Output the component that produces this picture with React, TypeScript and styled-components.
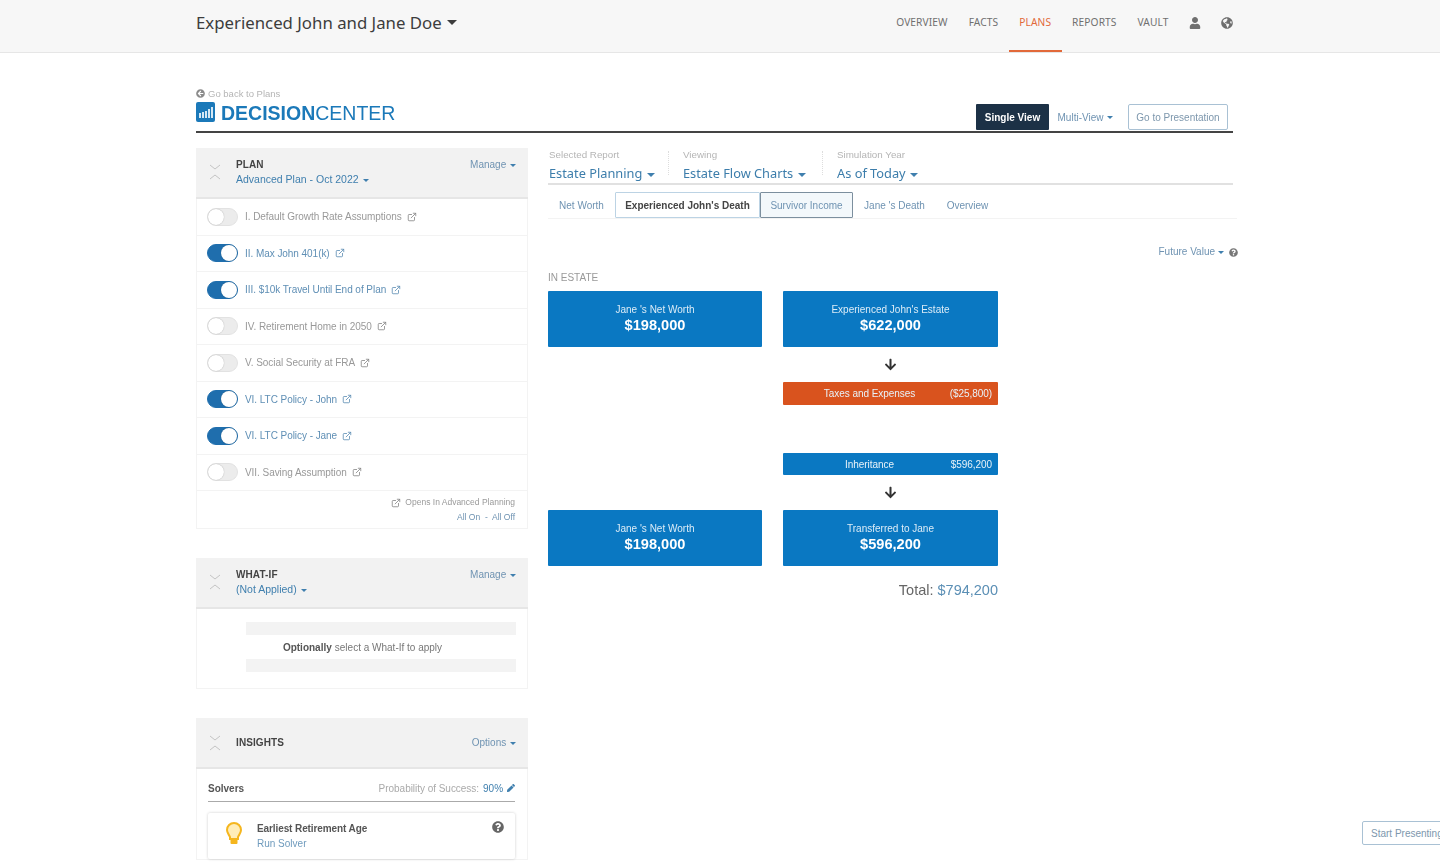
import React from 'react';
import styled, { createGlobalStyle } from 'styled-components';
import { ExternalLink } from 'lucide-react';
import {
  FaArrowCircleLeft,
  FaArrowDown,
  FaGlobeAmericas,
  FaPen,
  FaQuestionCircle,
  FaUser,
} from 'react-icons/fa';

const BLUE = '#0a78c2';
const LINK = '#3f7fae';
const TITLE_FONT = '"Noto Sans", "Open Sans", sans-serif';

const GlobalStyle = createGlobalStyle`
  html, body {
    margin: 0;
    padding: 0;
    background: #fff;
    overflow: hidden;
    font-family: "Liberation Sans", Arial, sans-serif;
  }
  * { box-sizing: border-box; }
`;

const Page = styled.div`
  width: 1440px;
  height: 864px;
  overflow: hidden;
  filter: blur(0.35px);
`;

const TopBar = styled.header`
  height: 53px;
  background: #f7f7f7;
  border-bottom: 1px solid #e6e6e6;
  padding: 0 207px 0 196px;
  display: flex;
  align-items: stretch;
  justify-content: space-between;
`;

const ClientName = styled.div`
  display: flex;
  align-items: center;
  gap: 4px;
  padding-bottom: 7px;
  font-family: ${TITLE_FONT};
  font-size: 16.8px;
  color: #3d3d3d;
`;

const Caret = styled.span<{ $size?: number; $color?: string }>`
  display: inline-block;
  width: 0;
  height: 0;
  margin-left: 1px;
  vertical-align: 1px;
  border-left: ${(p) => p.$size || 3}px solid transparent;
  border-right: ${(p) => p.$size || 3}px solid transparent;
  border-top: ${(p) => p.$size || 3}px solid ${(p) => p.$color || LINK};
`;

const Nav = styled.nav`
  display: flex;
  align-items: stretch;
`;

const NavLink = styled.a<{ $active?: boolean }>`
  display: flex;
  align-items: center;
  padding: 0 10.5px 6px;
  font-family: ${TITLE_FONT};
  font-size: 10.2px;
  letter-spacing: 0.1px;
  color: ${(p) => (p.$active ? '#e2693a' : '#707070')};
  border-bottom: 2px solid ${(p) => (p.$active ? '#e2693a' : 'transparent')};
`;

const NavIcon = styled.span`
  display: flex;
  align-items: center;
  padding: 0 0 7px 0;
  margin-left: 10px;
  font-size: 12px;
  color: #6f6f6f;
  & + & { margin-left: 20px; }
`;

const Content = styled.main`
  width: 1037px;
  margin-left: 196px;
`;

const TitleRow = styled.div`
  height: 80px;
  padding-top: 35px;
  display: flex;
  justify-content: space-between;
  align-items: flex-end;
  border-bottom: 2px solid #444;
`;

const BackLink = styled.div`
  display: flex;
  align-items: center;
  gap: 3px;
  margin-bottom: 3px;
  font-size: 9.5px;
  color: #b5b5b5;
  svg { color: #8b8b8b; font-size: 9px; }
`;

const Logo = styled.div`
  height: 20px;
  display: flex;
  align-items: flex-start;
  gap: 6px;
  margin: 1px 0 9px;
  font-size: 19.5px;
  color: #1b79b9;
  font-weight: 400;
  line-height: 20px;
  b { font-weight: 700; }
  span { padding-top: 1px; }
`;

const ViewSwitch = styled.div`
  display: flex;
  align-items: center;
  padding: 0 5px 1px 0;
`;

const SingleView = styled.div`
  width: 73px;
  height: 26px;
  display: flex;
  align-items: center;
  justify-content: center;
  background: #1c3146;
  color: #fff;
  font-size: 10px;
  font-weight: 700;
  border-radius: 1px;
`;

const MultiView = styled.div`
  width: 73px;
  height: 26px;
  display: flex;
  align-items: center;
  justify-content: center;
  gap: 3px;
  color: #6f93b2;
  font-size: 10px;
`;

const Outlined = styled.div`
  width: 100px;
  height: 26px;
  margin-left: 6px;
  display: flex;
  align-items: center;
  justify-content: center;
  color: #7d97ad;
  font-size: 10px;
  border: 1px solid #a9c1d4;
  border-radius: 2px;
`;

const Columns = styled.div`
  display: grid;
  grid-template-columns: 332px 685px;
  column-gap: 20px;
  padding-top: 15px;
`;

const Sidebar = styled.aside`
  display: flex;
  flex-direction: column;
  gap: 29px;
`;

const Panel = styled.section`
  border: 1px solid #f3f3f3;
  border-top: none;
`;

const PanelHead = styled.div<{ $single?: boolean }>`
  height: 51px;
  margin: 0 -1px;
  padding: 0 12px ${(p) => (p.$single ? 0 : 2)}px 0;
  background: #f2f2f2;
  border-bottom: 2px solid #e6e6e6;
  display: grid;
  grid-template-columns: 40px 1fr auto;
  align-items: center;
`;

const Chevrons = styled.svg`
  width: 12px;
  height: 18px;
  margin-left: 13px;
`;

const PanelTitle = styled.div`
  font-size: 10px;
  font-weight: 700;
  color: #444;
  line-height: 15px;
  letter-spacing: 0.1px;
`;

const PanelSub = styled.div`
  font-size: 10.5px;
  color: ${LINK};
  line-height: 15px;
`;

const HeadAction = styled.div<{ $center?: boolean }>`
  align-self: ${(p) => (p.$center ? 'center' : 'start')};
  margin-top: ${(p) => (p.$center ? 0 : 11)}px;
  font-size: 10px;
  color: #6f93b2;
`;

const PlanRow = styled.div`
  height: 36.5px;
  padding-left: 10px;
  display: flex;
  align-items: center;
  gap: 7px;
  border-bottom: 1px solid #f3f3f3;
`;

const Toggle = styled.span<{ $on?: boolean }>`
  position: relative;
  width: 31px;
  height: 18px;
  border-radius: 9px;
  background: ${(p) => (p.$on ? '#1f6ead' : '#ececec')};
  border: 1px solid ${(p) => (p.$on ? '#1f6ead' : '#e2e2e2')};
  &::after {
    content: '';
    position: absolute;
    top: 0;
    left: ${(p) => (p.$on ? '13px' : '0')};
    width: 16px;
    height: 16px;
    border-radius: 50%;
    background: #fff;
    box-shadow: 0 0 1px rgba(0, 0, 0, 0.35);
  }
`;

const PlanLabel = styled.span<{ $on?: boolean }>`
  display: flex;
  align-items: center;
  gap: 5px;
  font-size: 10px;
  letter-spacing: -0.05px;
  color: ${(p) => (p.$on ? '#5f8fb5' : '#999')};
  svg { color: ${(p) => (p.$on ? '#5f8fb5' : '#888')}; }
`;

const PanelFoot = styled.div`
  height: 37px;
  padding: 4px 12px 0;
  text-align: right;
  font-size: 8.5px;
  line-height: 15px;
  color: #9a9a9a;
`;

const FootNote = styled.div`
  display: flex;
  justify-content: flex-end;
  align-items: center;
  gap: 4px;
  svg { color: #888; }
`;

const FootLinks = styled.div`
  color: #6f93b2;
`;

const WhatIfBody = styled.div`
  height: 79px;
  padding: 13px 11px 0 49px;
  display: flex;
  flex-direction: column;
  justify-content: flex-start;
`;

const Bar = styled.div`
  height: 13px;
  background: #f3f3f3;
`;

const WhatIfText = styled.div`
  height: 24px;
  padding: 0 37px 0 0;
  display: flex;
  align-items: center;
  justify-content: center;
  gap: 3px;
  font-size: 10px;
  color: #777;
  b { color: #555; }
`;

const InsightBody = styled.div`
  padding: 10px 12px 0 11px;
`;

const SolverHead = styled.div`
  display: flex;
  justify-content: space-between;
  align-items: center;
  height: 18px;
  padding-bottom: 4px;
  margin-bottom: 11px;
  border-bottom: 1px solid #aaa;
  box-sizing: content-box;
  font-size: 10px;
  color: #555;
  b { font-weight: 700; }
`;

const Probability = styled.span`
  display: flex;
  align-items: center;
  gap: 4px;
  color: #aaa;
  letter-spacing: -0.03px;
  em { font-style: normal; color: ${LINK}; }
  svg { color: ${LINK}; font-size: 8px; }
`;

const SolverCard = styled.div`
  height: 46px;
  padding: 8px 12px 0 17px;
  display: grid;
  grid-template-columns: 32px 1fr auto;
  border-radius: 2px;
  box-shadow: 0 0 3px rgba(0, 0, 0, 0.2);
`;

const BulbIcon = styled.svg`
  width: 18px;
  height: 26px;
`;

const SolverName = styled.div`
  font-size: 10px;
  font-weight: 700;
  letter-spacing: -0.1px;
  color: #555;
  line-height: 15px;
`;

const SolverRun = styled.div`
  font-size: 10px;
  color: #6f9bbd;
  line-height: 15px;
`;

const HelpIcon = styled.span`
  color: #666;
  font-size: 12px;
  margin-right: -1px;
`;

const Report = styled.section`
  min-width: 0;
`;

const Selectors = styled.div`
  width: 685px;
  height: 37px;
  padding-left: 1px;
  display: flex;
  border-bottom: 2px solid #e1e1e1;
`;

const Selector = styled.div<{ $width: number; $divided?: boolean }>`
  width: ${(p) => p.$width}px;
  position: relative;
  &::after {
    content: '';
    display: ${(p) => (p.$divided ? 'block' : 'none')};
    position: absolute;
    right: 14px;
    top: 3px;
    height: 24px;
    border-right: 1px dotted #ddd;
  }
`;

const SelectorLabel = styled.div`
  font-size: 9.8px;
  color: #b5b5b5;
  line-height: 13px;
`;

const SelectorValue = styled.div`
  margin-top: 2px;
  font-family: ${TITLE_FONT};
  font-size: 12.8px;
  line-height: 20px;
  color: #3c7dab;
`;

const Tabs = styled.div`
  width: 689px;
  height: 34px;
  display: flex;
  align-items: stretch;
  padding: 7px 0 0;
  border-bottom: 1px solid #f3f3f3;
`;

const Tab = styled.div<{ $kind?: 'selected' | 'focus'; $width: number }>`
  width: ${(p) => p.$width}px;
  display: flex;
  align-items: center;
  justify-content: center;
  font-size: 10px;
  border-radius: 1px;
  font-weight: ${(p) => (p.$kind === 'selected' ? 700 : 400)};
  color: ${(p) => (p.$kind === 'selected' ? '#444' : '#6f93b2')};
  background: ${(p) => (p.$kind === 'focus' ? '#f3f8fb' : 'transparent')};
  border: 1px solid
    ${(p) =>
      p.$kind === 'selected'
        ? '#bcd3e4'
        : p.$kind === 'focus'
          ? '#7c8f9e'
          : 'transparent'};
`;

const ValueSwitch = styled.div`
  width: 690px;
  margin-top: 27px;
  display: flex;
  justify-content: flex-end;
  align-items: center;
  gap: 2px;
  font-size: 10px;
  line-height: 12px;
  color: #6f93b2;
  svg { color: #777; font-size: 9px; margin-left: 3px; }
`;

const SectionLabel = styled.div`
  margin-top: 14px;
  font-size: 10px;
  line-height: 12px;
  color: #999;
`;

const Flow = styled.div`
  width: 450px;
  margin-top: 7px;
  display: grid;
  grid-template-columns: 214px 215px;
  column-gap: 21px;
`;

const ValueBox = styled.div<{ $column?: number }>`
  grid-column: ${(p) => p.$column || 'auto'};
  height: 56px;
  padding-bottom: 2px;
  background: ${BLUE};
  border-radius: 1px;
  color: #fff;
  display: flex;
  flex-direction: column;
  align-items: center;
  justify-content: center;
  text-align: center;
`;

const BoxLabel = styled.div`
  font-size: 10px;
  line-height: 14px;
  color: #dcecf7;
`;

const BoxValue = styled.div`
  font-size: 14.6px;
  font-weight: 700;
  line-height: 17px;
`;

const Arrow = styled.div<{ $height: number }>`
  grid-column: 2;
  height: ${(p) => p.$height}px;
  display: flex;
  align-items: center;
  justify-content: center;
  color: #333;
  font-size: 13px;
`;

const Strip = styled.div<{ $color: string; $height: number; $gapBelow?: number }>`
  grid-column: 2;
  height: ${(p) => p.$height}px;
  margin-bottom: ${(p) => p.$gapBelow || 0}px;
  padding: 0 6px 0 0;
  background: ${(p) => p.$color};
  border-radius: 1px;
  display: grid;
  grid-template-columns: 1fr 66px;
  align-items: center;
  font-size: 10px;
  letter-spacing: -0.05px;
  color: #e8f2f8;
  span:first-child { text-align: center; padding-left: 30px; }
  span:last-child { text-align: right; }
`;

const Total = styled.div`
  grid-column: 1 / -1;
  margin-top: 14px;
  text-align: right;
  font-size: 14.5px;
  line-height: 20px;
  color: #666;
  em { font-style: normal; color: #5b8fb5; }
`;

const PresentButton = styled.div`
  position: fixed;
  left: 1362px;
  top: 821px;
  width: 100px;
  height: 24px;
  padding-left: 8px;
  display: flex;
  align-items: center;
  background: #fff;
  border: 1px solid #a9c1d4;
  border-radius: 2px;
  font-size: 10px;
  color: #7d97ad;
  white-space: nowrap;
`;

const plans = [
  { label: 'I. Default Growth Rate Assumptions', on: false },
  { label: 'II. Max John 401(k)', on: true },
  { label: 'III. $10k Travel Until End of Plan', on: true },
  { label: 'IV. Retirement Home in 2050', on: false },
  { label: 'V. Social Security at FRA', on: false },
  { label: 'VI. LTC Policy - John', on: true },
  { label: 'VI. LTC Policy - Jane', on: true },
  { label: 'VII. Saving Assumption', on: false },
];

function Collapse() {
  return (
    <Chevrons viewBox="0 0 12 18" fill="none" stroke="#c4c4c4" strokeWidth="1">
      <path d="M1 2l5 4 5-4" />
      <path d="M1 16l5-4 5 4" />
    </Chevrons>
  );
}

function LogoMark() {
  return (
    <svg width="19" height="20" viewBox="0 0 19 20">
      <rect width="19" height="20" rx="2" fill="#1b79b9" />
      <path
        d="M3 11h2v5H3zM6 10h2v6H6zM9 9h2v7H9zM12 7h2v9h-2zM15 5h2v11h-2z"
        fill="#d5e8f5"
      />
    </svg>
  );
}

function App() {
  return (
    <Page>
      <GlobalStyle />
      <TopBar>
        <ClientName>
          Experienced John and Jane Doe <Caret $size={5} $color="#3d3d3d" />
        </ClientName>
        <Nav>
          <NavLink>OVERVIEW</NavLink>
          <NavLink>FACTS</NavLink>
          <NavLink $active>PLANS</NavLink>
          <NavLink>REPORTS</NavLink>
          <NavLink>VAULT</NavLink>
          <NavIcon>
            <FaUser />
          </NavIcon>
          <NavIcon>
            <FaGlobeAmericas />
          </NavIcon>
        </Nav>
      </TopBar>
      <Content>
        <TitleRow>
          <div>
            <BackLink>
              <FaArrowCircleLeft /> Go back to Plans
            </BackLink>
            <Logo>
              <LogoMark />
              <span>
                <b>DECISION</b>CENTER
              </span>
            </Logo>
          </div>
          <ViewSwitch>
            <SingleView>Single View</SingleView>
            <MultiView>
              Multi-View <Caret />
            </MultiView>
            <Outlined>Go to Presentation</Outlined>
          </ViewSwitch>
        </TitleRow>
        <Columns>
          <Sidebar>
            <Panel>
              <PanelHead>
                <Collapse />
                <div>
                  <PanelTitle>PLAN</PanelTitle>
                  <PanelSub>
                    Advanced Plan - Oct 2022 <Caret />
                  </PanelSub>
                </div>
                <HeadAction>
                  Manage <Caret />
                </HeadAction>
              </PanelHead>
              {plans.map((plan) => (
                <PlanRow key={plan.label}>
                  <Toggle $on={plan.on} />
                  <PlanLabel $on={plan.on}>
                    {plan.label}
                    <ExternalLink size={10} />
                  </PlanLabel>
                </PlanRow>
              ))}
              <PanelFoot>
                <FootNote>
                  <ExternalLink size={10} /> Opens In Advanced Planning
                </FootNote>
                <FootLinks>All On &nbsp;-&nbsp; All Off</FootLinks>
              </PanelFoot>
            </Panel>
            <Panel>
              <PanelHead>
                <Collapse />
                <div>
                  <PanelTitle>WHAT-IF</PanelTitle>
                  <PanelSub>
                    (Not Applied) <Caret />
                  </PanelSub>
                </div>
                <HeadAction>
                  Manage <Caret />
                </HeadAction>
              </PanelHead>
              <WhatIfBody>
                <Bar />
                <WhatIfText>
                  <b>Optionally</b> select a What-If to apply
                </WhatIfText>
                <Bar />
              </WhatIfBody>
            </Panel>
            <Panel>
              <PanelHead $single>
                <Collapse />
                <PanelTitle>INSIGHTS</PanelTitle>
                <HeadAction $center>
                  Options <Caret />
                </HeadAction>
              </PanelHead>
              <InsightBody>
                <SolverHead>
                  <b>Solvers</b>
                  <Probability>
                    Probability of Success: <em>90%</em> <FaPen />
                  </Probability>
                </SolverHead>
                <SolverCard>
                  <BulbIcon viewBox="0 0 18 26">
                    <path
                      d="M9 2a7 7 0 0 0-7 7c0 3 2 4.500 3 7v2h8v-2c1-2.500 3-4 3-7a7 7 0 0 0-7-7z"
                      fill="#ffedb8"
                      stroke="#f5b61e"
                      strokeWidth="2"
                    />
                    <rect x="5.500" y="18" width="7" height="5" rx="1" fill="#f5b61e" />
                  </BulbIcon>
                  <div>
                    <SolverName>Earliest Retirement Age</SolverName>
                    <SolverRun>Run Solver</SolverRun>
                  </div>
                  <HelpIcon>
                    <FaQuestionCircle />
                  </HelpIcon>
                </SolverCard>
              </InsightBody>
            </Panel>
          </Sidebar>
          <Report>
            <Selectors>
              <Selector $width={134} $divided>
                <SelectorLabel>Selected Report</SelectorLabel>
                <SelectorValue>
                  Estate Planning <Caret $size={4} />
                </SelectorValue>
              </Selector>
              <Selector $width={154} $divided>
                <SelectorLabel>Viewing</SelectorLabel>
                <SelectorValue>
                  Estate Flow Charts <Caret $size={4} />
                </SelectorValue>
              </Selector>
              <Selector $width={200}>
                <SelectorLabel>Simulation Year</SelectorLabel>
                <SelectorValue>
                  As of Today <Caret $size={4} />
                </SelectorValue>
              </Selector>
            </Selectors>
            <Tabs>
              <Tab $width={67}>Net Worth</Tab>
              <Tab $width={145} $kind="selected">
                Experienced John's Death
              </Tab>
              <Tab $width={93} $kind="focus">
                Survivor Income
              </Tab>
              <Tab $width={83}>Jane 's Death</Tab>
              <Tab $width={63}>Overview</Tab>
            </Tabs>
            <ValueSwitch>
              Future Value <Caret /> <FaQuestionCircle />
            </ValueSwitch>
            <SectionLabel>IN ESTATE</SectionLabel>
            <Flow>
              <ValueBox>
                <BoxLabel>Jane 's Net Worth</BoxLabel>
                <BoxValue>$198,000</BoxValue>
              </ValueBox>
              <ValueBox>
                <BoxLabel>Experienced John's Estate</BoxLabel>
                <BoxValue>$622,000</BoxValue>
              </ValueBox>
              <Arrow $height={35}>
                <FaArrowDown />
              </Arrow>
              <Strip $color="#d9531e" $height={23} $gapBelow={48}>
                <span>Taxes and Expenses</span>
                <span>($25,800)</span>
              </Strip>
              <Strip $color={BLUE} $height={22}>
                <span>Inheritance</span>
                <span>$596,200</span>
              </Strip>
              <Arrow $height={35}>
                <FaArrowDown />
              </Arrow>
              <ValueBox $column={1}>
                <BoxLabel>Jane 's Net Worth</BoxLabel>
                <BoxValue>$198,000</BoxValue>
              </ValueBox>
              <ValueBox>
                <BoxLabel>Transferred to Jane</BoxLabel>
                <BoxValue>$596,200</BoxValue>
              </ValueBox>
              <Total>
                Total: <em>$794,200</em>
              </Total>
            </Flow>
          </Report>
        </Columns>
      </Content>
      <PresentButton>Start Presenting</PresentButton>
    </Page>
  );
}

export default App;
